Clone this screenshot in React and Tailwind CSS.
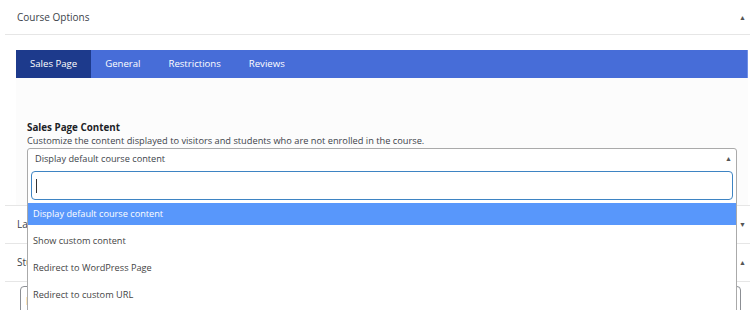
import { useState } from "react";

const tabs = ["Sales Page", "General", "Restrictions", "Reviews"];

const options = [
  "Display default course content",
  "Show custom content",
  "Redirect to WordPress Page",
  "Redirect to custom URL",
];

function Caret({ up = true }) {
  return (
    <span className="text-[7px] leading-none text-[#555]">{up ? "▲" : "▼"}</span>
  );
}

function App() {
  const [active, setActive] = useState(0);
  const [selected, setSelected] = useState(0);

  return (
    <div className="relative w-[750px] h-[310px] overflow-hidden bg-white font-['Open_Sans',sans-serif] text-[#3c434a]">
      {/* Course Options header */}
      <div className="ml-[5px] h-[35px] flex items-center justify-between pl-3 pr-[4px] border-b border-[#e6e6e6]">
        <span className="text-[10px]">Course Options</span>
        <Caret />
      </div>

      {/* tabs */}
      <div className="ml-4 mr-[2px] mt-[15px] h-[28px] flex bg-[#476dd8] border-r border-[#6f8fe6]">
        {tabs.map((t, i) => (
          <button
            key={t}
            onClick={() => setActive(i)}
            className={`h-full px-[14px] text-[9.6px] text-white ${i === active ? "bg-[#1d3a8c]" : ""}`}
          >
            {t}
          </button>
        ))}
      </div>

      {/* sales page panel */}
      <div className="ml-4 mr-[2px] h-[127px] bg-[#fcfcfc] pt-[43px] px-[11px]">
        <div className="text-[9.8px] font-bold text-[#1d2327] leading-[14px]">Sales Page Content</div>
        <div className="text-[9.25px] leading-[12px] mb-[1px]">
          Customize the content displayed to visitors and students who are not enrolled in the course.
        </div>
        <div className="relative">
          <div className="h-[21px] flex items-center justify-between pl-[7px] pr-[4px] bg-white border border-[#aaa] rounded-t-[3px]">
            <span className="text-[9.2px]">{options[selected]}</span>
            <Caret />
          </div>
          {/* open dropdown */}
          <div className="absolute z-10 left-0 right-0 top-[20px] h-[200px] bg-white border border-[#aaa] border-t-0">
            <div className="p-[3px]">
              <div className="h-[29px] border border-[#3e84c3] rounded-[4px] flex items-center pl-[4px]">
                <span className="w-px h-[14px] bg-[#333]" />
              </div>
            </div>
            <div className="flex flex-col">
              {options.map((o, i) =>
                i === selected ? (
                  <div
                    key={o}
                    className="h-[22px] mb-[2px] flex items-center pl-[5px] text-[9.2px] bg-[#5897fb] text-white"
                  >
                    {o}
                  </div>
                ) : (
                  <div
                    key={o}
                    onClick={() => setSelected(i)}
                    className="h-[27px] flex items-center pl-[5px] text-[9.2px] text-[#444]"
                  >
                    {o}
                  </div>
                )
              )}
            </div>
          </div>
        </div>
      </div>

      {/* postboxes below, partly hidden by the open dropdown */}
      <div className="ml-[5px] h-[38px] flex items-center justify-between pl-3 pr-[4px] border-t border-[#e6e6e6]">
        <span className="text-[10px]">Layout</span>
        <Caret up={false} />
      </div>
      <div className="ml-[5px] h-[38px] flex items-center justify-between pl-3 pr-[4px] border-t border-[#e6e6e6]">
        <span className="text-[10px]">Students</span>
        <Caret />
      </div>
      <div className="ml-[5px] border-t border-[#e6e6e6] pt-[4px] pl-[15px] pr-[9px]">
        <div className="h-[30px] border border-[#8c8f94] rounded-[4px] flex items-center pl-[5px] text-[10px]">
          Manage
        </div>
      </div>
    </div>
  );
}

export default App;
